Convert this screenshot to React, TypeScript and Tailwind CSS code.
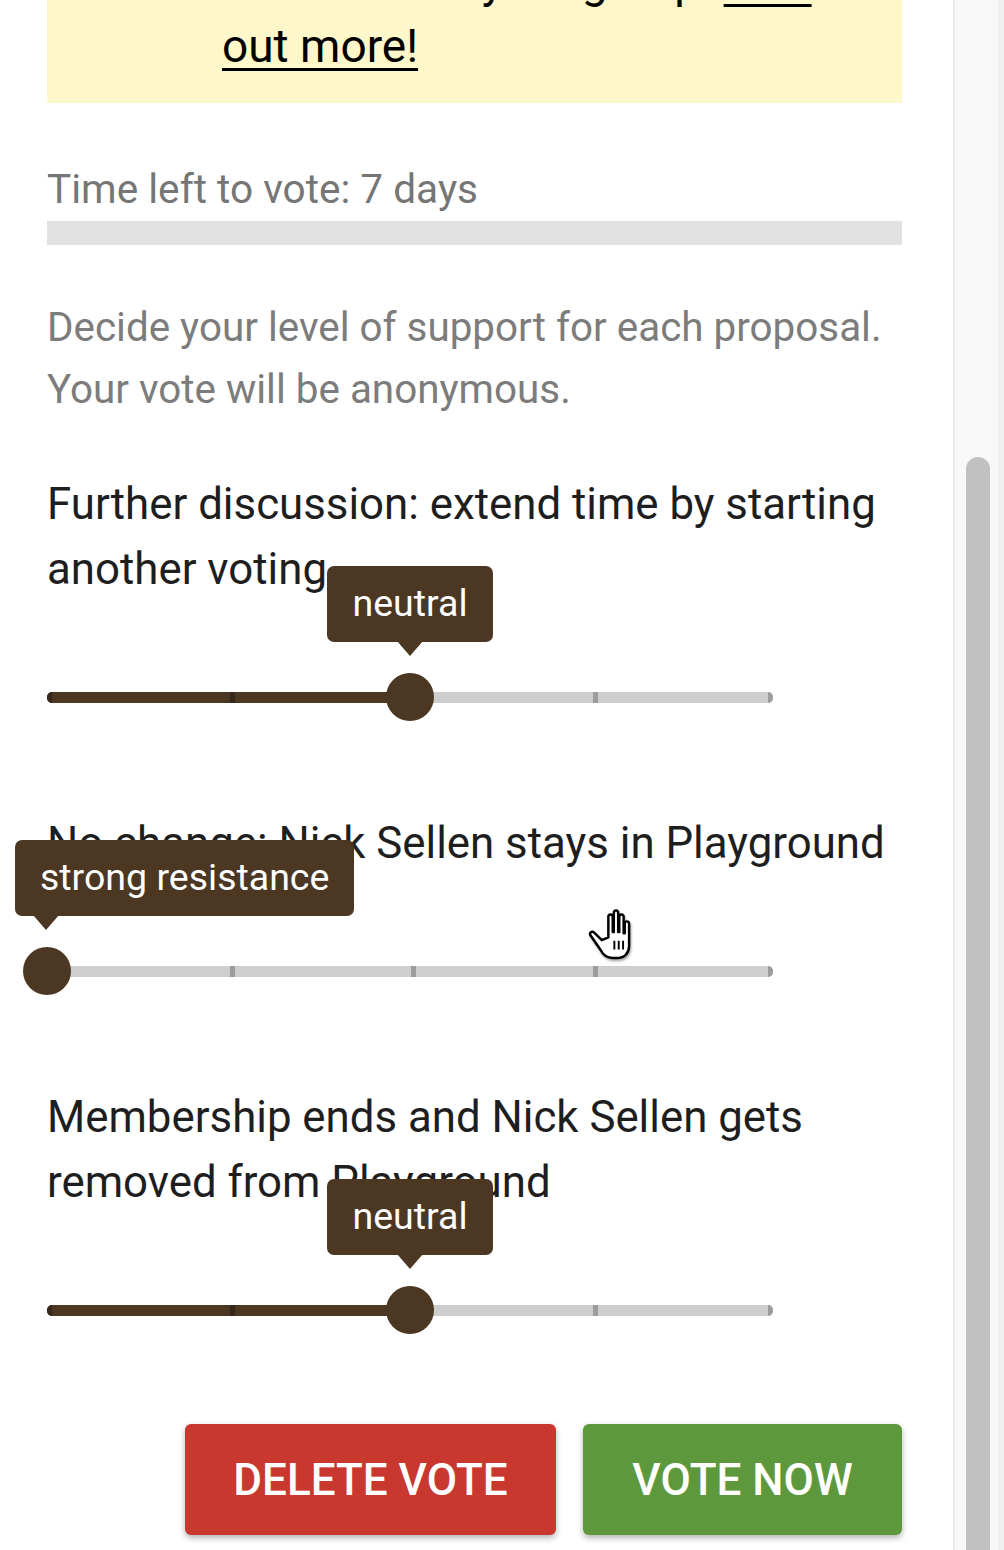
import React from "react";

const BROWN = "#4b3722";

type Proposal = {
  title: string;
  value: number; // 0..4
  label: string;
  align: "center" | "start";
};

const proposals: Proposal[] = [
  {
    title: "Further discussion: extend time by starting another voting",
    value: 2,
    label: "neutral",
    align: "center",
  },
  {
    title: "No change: Nick Sellen stays in Playground",
    value: 0,
    label: "strong resistance",
    align: "start",
  },
  {
    title: "Membership ends and Nick Sellen gets removed from Playground",
    value: 2,
    label: "neutral",
    align: "center",
  },
];

const TRACK_W = 726;

function Slider({ value, label, align }: { value: number; label: string; align: "center" | "start" }) {
  const x = (TRACK_W * value) / 4;
  const ticks = [0, 1, 2, 3, 4];
  return (
    <div className="relative flex h-[48px] w-[726px] items-center">
      {/* rail */}
      <div className="relative h-[11px] w-full rounded-full bg-[#cecece]">
        <div
          className="absolute left-0 top-0 h-full rounded-l-full bg-[#4b3722]"
          style={{ width: x }}
        />
        {ticks.map((t) => {
          const tx = (TRACK_W * t) / 4;
          const filled = tx <= x;
          const edge = t === 0 || t === 4;
          return (
            <div
              key={t}
              className={
                (filled ? "bg-[#36271a] " : "bg-[#9c9c9c] ") +
                (t === 0 ? "rounded-l-full " : t === 4 ? "rounded-r-full " : "") +
                "absolute top-0 h-full w-[5px]"
              }
              style={{ left: edge ? (t === 0 ? 0 : tx - 5) : tx + 1 }}
            />
          );
        })}
      </div>
      {/* thumb */}
      <div
        className="absolute top-0 h-[48px] w-[48px] rounded-full bg-[#4b3722]"
        style={{ left: x - 24 }}
      />
      {/* value label */}
      <div
        className="absolute bottom-[64px] flex flex-col"
        style={
          align === "center"
            ? { left: x - 82, width: 164, alignItems: "center" }
            : { left: x - 32, alignItems: "flex-start" }
        }
      >
        <div className="flex h-[76px] items-center whitespace-nowrap rounded-[7px] bg-[#4b3722] px-[25px] text-[37.5px] leading-none text-white">
          {label}
        </div>
        <svg
          width="26"
          height="16"
          viewBox="0 0 26 16"
          className="-mt-px"
          style={align === "start" ? { marginLeft: 18 } : undefined}
        >
          <path d="M0 0 L26 0 L13 15 Z" fill={BROWN} />
        </svg>
      </div>
    </div>
  );
}

function GrabCursor() {
  return (
    <svg
      width="56"
      height="60"
      viewBox="0 0 20 22"
      className="drop-shadow-[1px_2px_1px_rgba(0,0,0,0.35)]"
    >
      <path
        d="M9.4 13 L9.4 5.5 C9.4 4.3 11 4.3 11 5.5 L11 11 L11.4 11 L11.4 4 C11.4 2.8 13 2.8 13 4 L13 11 L13.4 11 L13.4 5.5 C13.4 4.3 15 4.3 15 5.5 L15 11.5 L15.4 11.5 L15.4 8 C15.4 6.8 17 6.8 17 8 L17 16 C17 18.5 15.5 20.5 13 20.5 L11 20.5 C9 20.5 7.5 19.5 6.5 17.5 L2.9 12.3 C2.2 11.4 3.4 10.4 4.2 11.2 L7 14 Z"
        fill="white"
        stroke="black"
        strokeWidth="0.9"
        strokeLinejoin="round"
      />
      <path d="M11.6 14.2 V17.4 M13.2 14.2 V17.4 M14.8 14.2 V17.4" stroke="black" strokeWidth="0.7" />
    </svg>
  );
}

export default function App() {
  return (
    <div className="relative flex h-[1550px] w-[1004px] overflow-hidden bg-white font-[Roboto,sans-serif]">
      <main className="flex w-[953px] flex-col pl-[47px] pr-[51px]">
        {/* info banner */}
        <div className="-mt-[74px] bg-[#fdf7c9] pb-[25px] pl-[175px] pr-[40px] pt-[24px] text-[46px] leading-[64px] text-black">
          <p>
            members of your group.{" "}
            <a href="#" className="underline decoration-[3px] underline-offset-[6px]">
              Find
              <br />
              out more!
            </a>
          </p>
        </div>

        <p className="mt-[62px] text-[40.6px] leading-[48px] text-[#767676]">Time left to vote: 7 days</p>
        <div className="mt-[8px] h-[24px] w-full bg-[#e2e2e2]" />

        <p className="mt-[52px] text-[40.4px] leading-[62px] text-[#7c7c7c]">
          Decide your level of support for each proposal. Your vote will be anonymous.
        </p>

        <div className="mt-[51px] flex flex-col gap-[90px]">
          {proposals.map((p) => (
            <div key={p.title} className="flex flex-col">
              <p className="text-[43.8px] leading-[65px] text-[#1e1e1e]">{p.title}</p>
              <div className="mt-[71px]">
                <Slider value={p.value} label={p.label} align={p.align} />
              </div>
            </div>
          ))}
        </div>

        <div className="mt-[90px] flex justify-end gap-[27px]">
          <button className="flex h-[111px] w-[371px] items-center justify-center rounded-[6px] bg-[#c9382f] text-[44px] font-medium uppercase text-white shadow-[0_3px_6px_rgba(0,0,0,0.3)]">
            Delete vote
          </button>
          <button className="flex h-[111px] w-[319px] items-center justify-center rounded-[6px] bg-[#5e983d] text-[44px] font-medium uppercase text-white shadow-[0_3px_6px_rgba(0,0,0,0.3)]">
            Vote now
          </button>
        </div>
      </main>

      {/* scrollbar */}
      <div className="flex w-[51px] flex-col border-l-2 border-r-[6px] border-l-[#ebebeb] border-r-[#efefef] bg-[#f8f8f8] pl-[11px] pt-[457px]">
        <div className="w-[24px] flex-1 rounded-t-[12px] bg-[#c1c1c1]" />
      </div>

      <div className="absolute left-[582px] top-[902px]">
        <GrabCursor />
      </div>
    </div>
  );
}
